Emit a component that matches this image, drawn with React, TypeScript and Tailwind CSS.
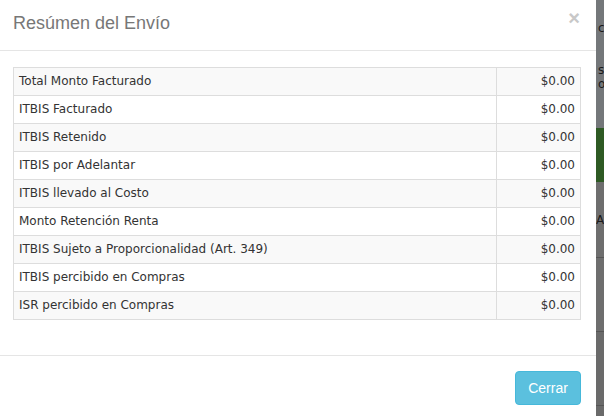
import React from 'react';

const rows = [
  'Total Monto Facturado',
  'ITBIS Facturado',
  'ITBIS Retenido',
  'ITBIS por Adelantar',
  'ITBIS llevado al Costo',
  'Monto Retención Renta',
  'ITBIS Sujeto a Proporcionalidad (Art. 349)',
  'ITBIS percibido en Compras',
  'ISR percibido en Compras',
];

const Backdrop: React.FC = () => (
  <div className="w-[8px] h-[416px] flex flex-col overflow-hidden bg-[#6f7173] text-[#1a1a1a] text-[12px] leading-none font-['DejaVu_Sans',sans-serif]">
    <div className="h-[128px] bg-[#74777a] pt-[22px] pl-[2px]">
      <div>c</div>
      <div className="mt-[30px]">s</div>
      <div className="mt-[2px]">o</div>
    </div>
    <div className="h-[54px] bg-[#2e5a24]" />
    <div className="h-[76px] bg-[#6e6e6e] pt-[32px] border-b border-[#555]">
      <div>A</div>
    </div>
    <div className="h-[74px] bg-[#6e6e6e] border-b border-[#555]" />
    <div className="flex-1 bg-[#6a6a6a] border-b border-[#555]" />
    <div className="h-[10px] bg-[#6a6a6a]" />
  </div>
);

export default function App() {
  return (
    <div className="flex w-[604px] h-[416px] overflow-hidden bg-white">
      <div className="w-[596px] h-[416px] bg-white flex flex-col">
        <div className="h-[51px] border-b border-[#e5e5e5] pl-[13px] pr-[15px] flex items-center justify-between">
          <h4 className="text-[18px] text-[#777] font-['Liberation_Sans',Arial,sans-serif] pb-[3px]">
            Resúmen del Envío
          </h4>
          <span className="text-[#c8c8c8] text-[20px] font-bold font-['Liberation_Sans',Arial,sans-serif] leading-none mb-[14px] mr-[1px]">
            ×
          </span>
        </div>
        <div className="pl-[13px] pr-[15px] pt-[16px] pb-[35px]">
          <table className="w-full border-collapse border border-[#ddd] text-[12px] leading-[17px] text-[#333] font-['DejaVu_Sans',Verdana,sans-serif]">
            <tbody>
              {rows.map((r, i) => (
                <tr key={r} className={i % 2 === 0 ? 'bg-[#f9f9f9]' : 'bg-white'}>
                  <td className="border border-[#ddd] px-[5px] py-[5px]">{r}</td>
                  <td className="border border-[#ddd] px-[5px] py-[5px] w-[84px] text-right">$0.00</td>
                </tr>
              ))}
            </tbody>
          </table>
        </div>
        <div className="border-t border-[#e5e5e5] pr-[15px] pt-[15px] flex justify-end">
          <button className="w-[66px] h-[34px] rounded-[4px] bg-[#5bc0de] border border-[#46b8da] text-white text-[14px] font-['Liberation_Sans',Arial,sans-serif]">
            Cerrar
          </button>
        </div>
      </div>
      <Backdrop />
    </div>
  );
}
